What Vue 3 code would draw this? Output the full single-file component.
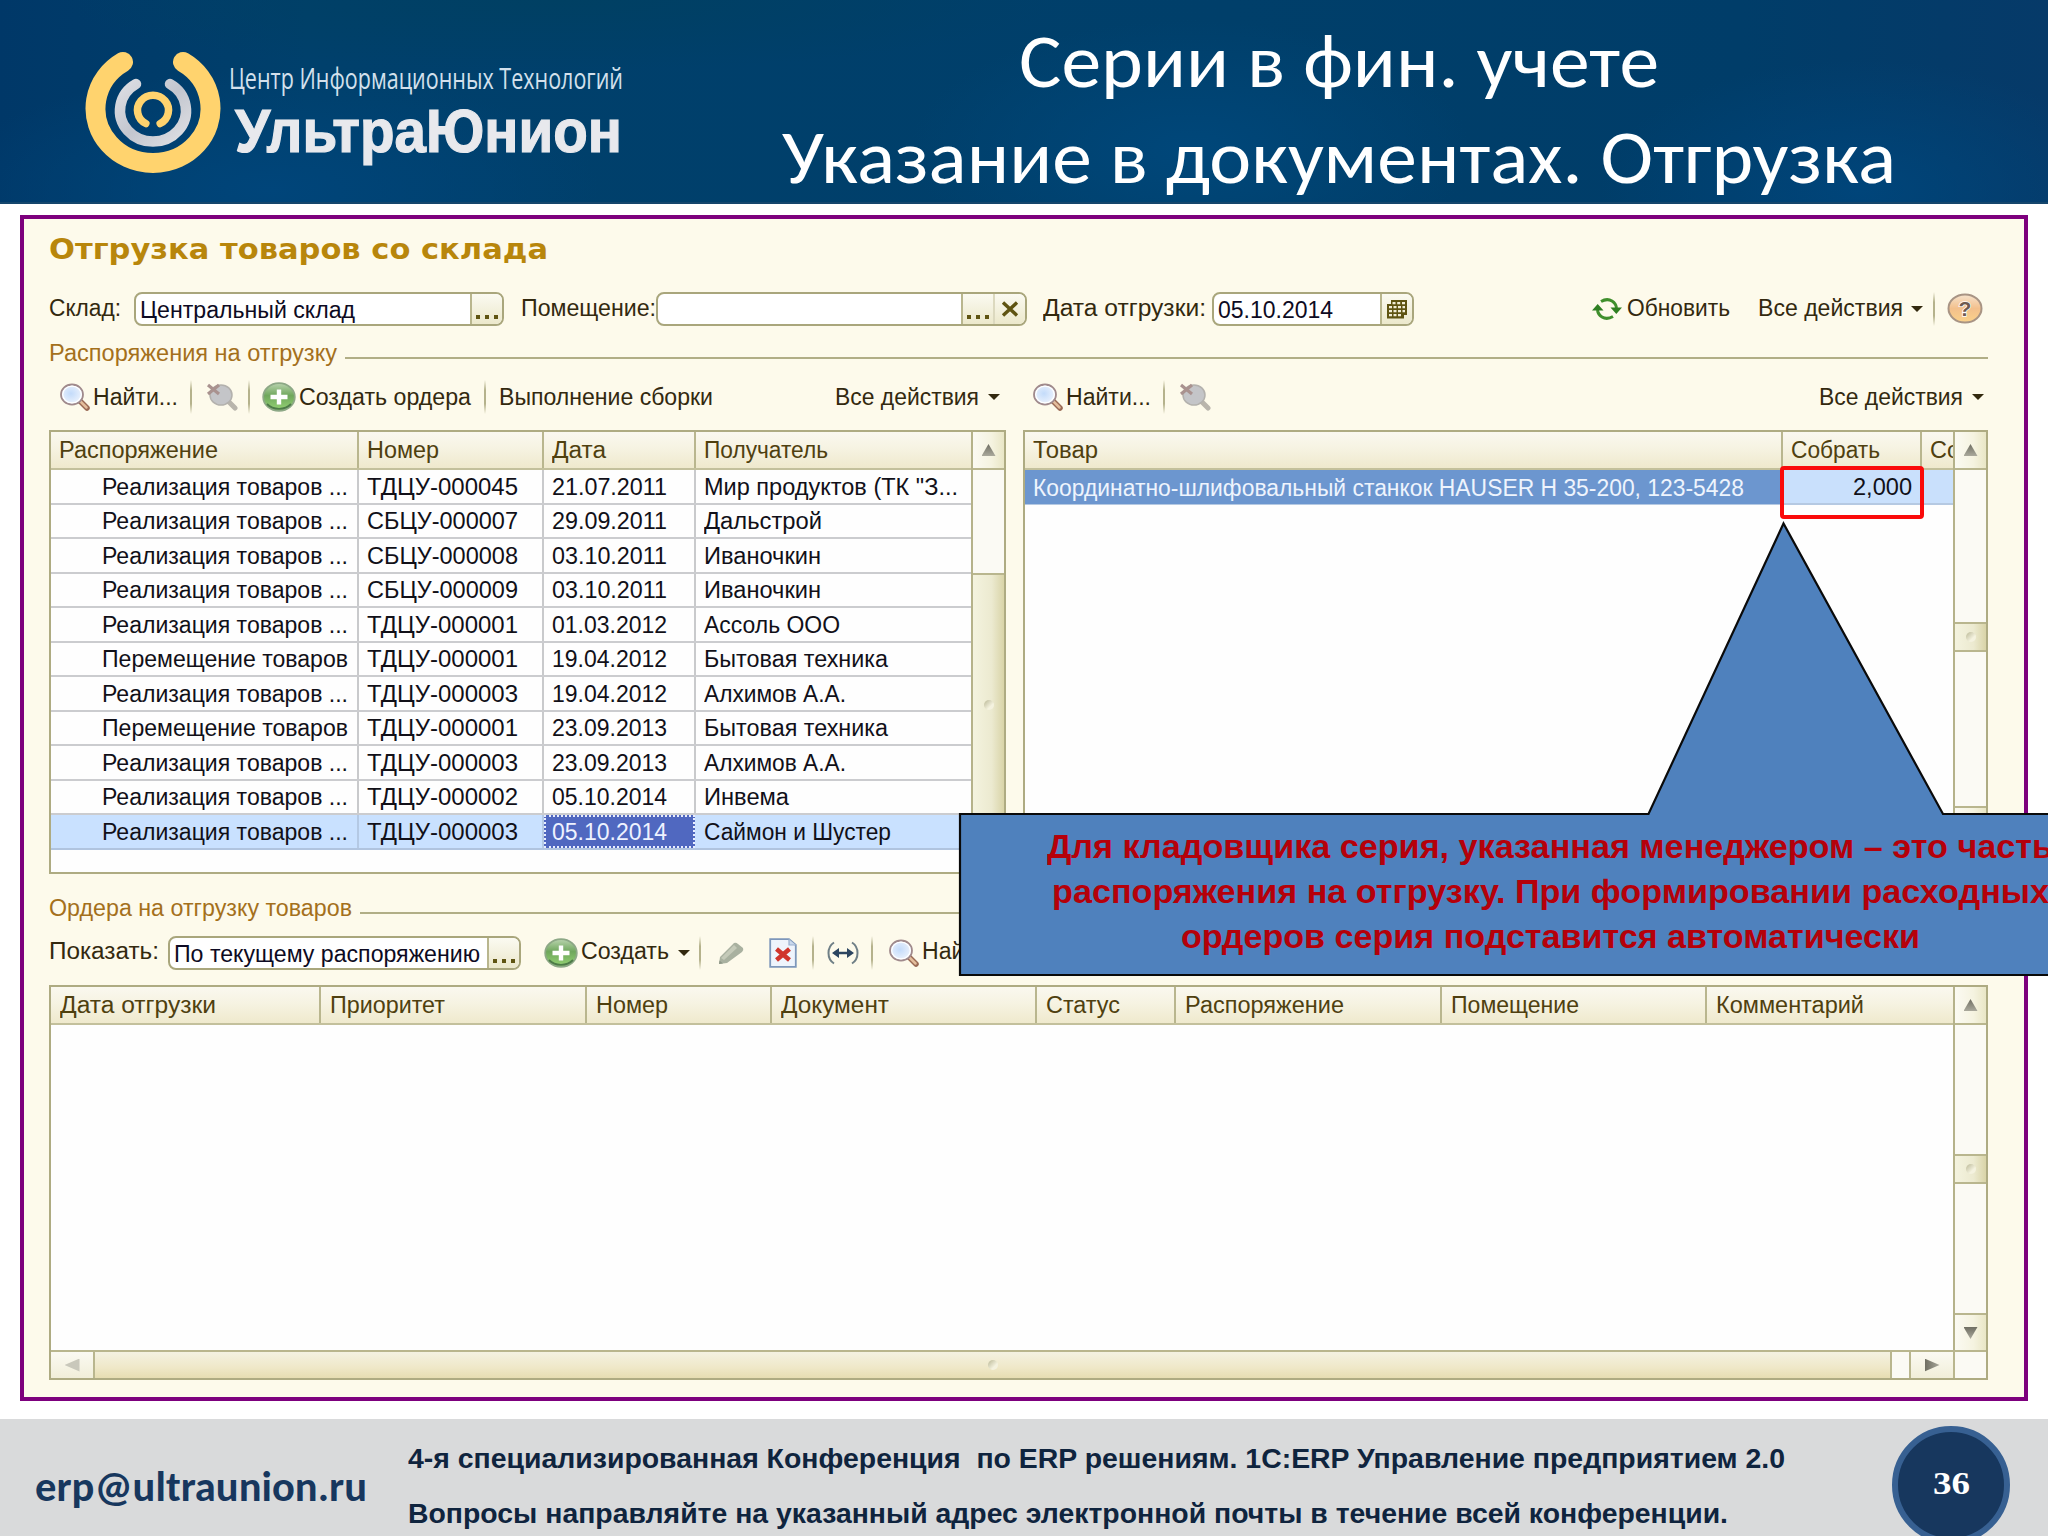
<script setup>
const fitText = (el, { value }) => {
  el.style.transform = 'none'
  el.style.marginRight = '0'
  const natural = el.getBoundingClientRect().width
  if (!natural) return
  el.style.transform = `scaleX(${value / natural})`
  el.style.marginRight = `${value - natural}px`
}
// Stretches a label horizontally to the given width
const vFit = { mounted: fitText, updated: fitText }

const R = 'Реализация товаров ...'
const P = 'Перемещение товаров'
const orders = [
  [R, 'ТДЦУ-000045', '21.07.2011', 'Мир продуктов (ТК "З...', 254],
  [R, 'СБЦУ-000007', '29.09.2011', 'Дальстрой', 118],
  [R, 'СБЦУ-000008', '03.10.2011', 'Иваночкин', 117],
  [R, 'СБЦУ-000009', '03.10.2011', 'Иваночкин', 117],
  [R, 'ТДЦУ-000001', '01.03.2012', 'Ассоль ООО', 136],
  [P, 'ТДЦУ-000001', '19.04.2012', 'Бытовая техника', 184],
  [R, 'ТДЦУ-000003', '19.04.2012', 'Алхимов А.А.', 142],
  [P, 'ТДЦУ-000001', '23.09.2013', 'Бытовая техника', 184],
  [R, 'ТДЦУ-000003', '23.09.2013', 'Алхимов А.А.', 142],
  [R, 'ТДЦУ-000002', '05.10.2014', 'Инвема', 85],
  [R, 'ТДЦУ-000003', '05.10.2014', 'Саймон и Шустер', 187],
]
const orderHeads = [['Распоряжение', 159], ['Номер', 72], ['Дата', 54], ['Получатель', 124]]
const shipHeads = [
  ['Дата отгрузки', 156], ['Приоритет', 115], ['Номер', 72], ['Документ', 108],
  ['Статус', 74], ['Распоряжение', 159], ['Помещение', 128], ['Комментарий', 148],
]
</script>

<template>
  <div class="slide">
    <svg width="0" height="0" class="defs">
      <defs>
        <radialGradient id="lens" cx=".45" cy=".45" r=".6">
          <stop offset="0" stop-color="#c3dbfa" /><stop offset="1" stop-color="#f2f6fd" />
        </radialGradient>
        <linearGradient id="green" x1="0" y1="0" x2="0" y2="1">
          <stop offset="0" stop-color="#b9d3ae" /><stop offset=".45" stop-color="#6fa75c" /><stop offset="1" stop-color="#96d474" />
        </linearGradient>
        <linearGradient id="amber" x1="0" y1="0" x2="0" y2="1">
          <stop offset="0" stop-color="#f6e3cd" /><stop offset=".5" stop-color="#f3c08c" /><stop offset="1" stop-color="#fbd28a" />
        </linearGradient>
        <linearGradient id="silver" x1="0" y1="0" x2="1" y2="1">
          <stop offset="0" stop-color="#dcdde3" /><stop offset=".5" stop-color="#c3c6cf" /><stop offset="1" stop-color="#dfe0e4" />
        </linearGradient>
        <symbol id="find" viewBox="0 0 30 28">
          <path d="M20 18 L27 25" stroke="#9a6a55" stroke-width="5.5" stroke-linecap="round" />
          <path d="M20.500 18.500 L26.500 24.500" stroke="#e3bd9c" stroke-width="2.500" stroke-linecap="round" />
          <ellipse cx="12" cy="11.500" rx="11" ry="10" fill="url(#lens)" stroke="#a08a8c" stroke-width="1.800" />
          <ellipse cx="12" cy="11.500" rx="9.300" ry="8.300" fill="none" stroke="#fff" stroke-width="1.200" />
        </symbol>
        <symbol id="unfind" viewBox="0 0 32 28">
          <path d="M22 18 L29 25" stroke="#b9b5ac" stroke-width="5" stroke-linecap="round" />
          <ellipse cx="15" cy="12" rx="11" ry="10" fill="#c4c5c8" stroke="#b3b1ad" stroke-width="1.500" />
          <path d="M2 2 L13 11 M13 2 L2 11" stroke="#a9928f" stroke-width="3.200" />
        </symbol>
        <symbol id="plus" viewBox="0 0 34 30">
          <ellipse cx="17" cy="15" rx="15.800" ry="13.800" fill="url(#green)" stroke="#8da886" stroke-width="1.800" />
          <path d="M5 22 A15.800 13.800 0 0 0 29 22" fill="none" stroke="#4d7a48" stroke-width="1.800" />
          <path d="M17 7.500V22.500M8.500 15H25.500" stroke="#fff" stroke-width="4.400" />
        </symbol>
      </defs>
    </svg>

    <header class="top">
      <svg class="mark" width="140" height="126" viewBox="84 50 140 126" fill="none" stroke-linecap="round">
        <path d="M123 62 A57.500 54.500 0 1 0 183 62" stroke="#ffd36e" stroke-width="20" />
        <path d="M136 84 A33 31 0 1 0 170 84" stroke="url(#silver)" stroke-width="10.500" />
        <path d="M145.800 123.500 A15.500 15 0 1 1 160.200 123.500" stroke="#ffd36e" stroke-width="7.500" />
      </svg>
      <div class="brand">
        <div class="brand-sub"><span v-fit="394" class="t">Центр Информационных Технологий</span></div>
        <div class="brand-name"><span v-fit="387" class="t">УльтраЮнион</span></div>
      </div>
      <h1 class="heading">
        <span class="line"><span v-fit="640" class="t">Серии в фин. учете</span></span>
        <span class="line"><span v-fit="1114" class="t">Указание в документах. Отгрузка</span></span>
      </h1>
    </header>

    <main class="panel">
      <h2 class="title"><span v-fit="499" class="t">Отгрузка товаров со склада</span></h2>

      <div class="row filters">
        <span class="lab"><span v-fit="72" class="t">Склад:</span></span>
        <div class="field store">
          <div class="value"><span v-fit="215" class="t">Центральный склад</span></div>
          <div class="btn dots"><i /><i /><i /></div>
        </div>
        <span class="lab room-lab"><span v-fit="135" class="t">Помещение:</span></span>
        <div class="field room">
          <div class="value" />
          <div class="btn dots"><i /><i /><i /></div>
          <div class="btn faint">
            <svg width="18" height="16" viewBox="0 0 18 16"><path d="M2 1.500L16 14.500M16 1.500L2 14.500" stroke="#5f5412" stroke-width="3.400" /></svg>
          </div>
        </div>
        <span class="lab date-lab"><span v-fit="163" class="t">Дата отгрузки:</span></span>
        <div class="field date">
          <div class="value"><span v-fit="115" class="t">05.10.2014</span></div>
          <div class="btn">
            <svg width="22" height="21" viewBox="0 0 22 21">
              <path d="M5 1H21V16H18V19.500H1V5H5Z" fill="#5f5412" />
              <path d="M6.500 3h3v2.200h-3zM11.200 3h3v2.200h-3zM16 3h3v2.200h-3zM3 7h3v2.200h-3zM7.500 7h3v2.200h-3zM12 7h3v2.200h-3zM16.500 7h2.500v2.200h-2.500zM3 11h3v2.200h-3zM7.500 11h3v2.200h-3zM12 11h3v2.200h-3zM16.500 11h2.500v2.200h-2.500zM3 15h3v2.200h-3zM7.500 15h3v2.200h-3zM12 15h3v2.200h-3z" fill="#f2eed6" />
            </svg>
          </div>
        </div>
        <div class="right-tools">
          <svg width="30" height="22" viewBox="0 0 30 22" fill="none" stroke="#3f8f2c" stroke-width="3">
            <path d="M9 3.500 Q15 0 20 3 Q24 5.500 24.500 10" /><path d="M21 18.500 Q15 22 10 19 Q6 16.500 5.500 12" />
            <path d="M18.500 9.500H30L24.300 16ZM0 12.500H11.500L5.700 6Z" fill="#2f7f22" stroke="none" />
          </svg>
          <span v-fit="103" class="t refresh">Обновить</span>
          <span v-fit="145" class="t">Все действия</span><i class="caret" /><i class="sep help-sep" />
          <svg width="36" height="31" viewBox="0 0 36 31">
            <ellipse cx="18" cy="15.500" rx="16.500" ry="14" fill="url(#amber)" stroke="#a89484" stroke-width="2" />
            <text x="18" y="23" text-anchor="middle" class="q">?</text>
          </svg>
        </div>
      </div>

      <div class="section first">
        <span v-fit="288" class="t">Распоряжения на отгрузку</span><i class="rule" />
      </div>

      <div class="bars">
        <div class="bar left-bar">
          <svg class="ic-find" width="30" height="28"><use href="#find" /></svg>
          <span v-fit="85" class="t">Найти...</span><i class="sep s1" />
          <svg class="ic-unfind" width="32" height="28"><use href="#unfind" /></svg><i class="sep s2" />
          <svg class="ic-plus" width="34" height="30"><use href="#plus" /></svg>
          <span v-fit="172" class="t">Создать ордера</span><i class="sep s3" />
          <span v-fit="214" class="t">Выполнение сборки</span>
          <span v-fit="144" class="t all">Все действия</span><i class="caret" />
        </div>
        <div class="bar right-bar">
          <svg class="ic-find" width="30" height="28"><use href="#find" /></svg>
          <span v-fit="85" class="t">Найти...</span><i class="sep s1" />
          <svg class="ic-unfind" width="32" height="28"><use href="#unfind" /></svg>
          <span v-fit="144" class="t all">Все действия</span><i class="caret" />
        </div>
      </div>

      <div class="tables">
        <div class="grid orders">
          <div class="sheet">
            <div class="head cols">
              <div v-for="h in orderHeads" :key="h[0]" class="cell"><span v-fit="h[1]" class="t">{{ h[0] }}</span></div>
            </div>
            <div v-for="(o, i) in orders" :key="i" class="cols line-row" :class="{ current: i === 10 }">
              <div class="cell"><span v-fit="246" class="t">{{ o[0] }}</span></div>
              <div class="cell"><span v-fit="151" class="t">{{ o[1] }}</span></div>
              <div class="cell" :class="{ active: i === 10 }"><span v-fit="115" class="t">{{ o[2] }}</span></div>
              <div class="cell"><span v-fit="o[4]" class="t">{{ o[3] }}</span></div>
            </div>
          </div>
          <div class="scroll">
            <div class="sbtn"><i class="up" /></div>
            <div class="gap-a" />
            <div class="thumb long"><i class="grip" /></div>
          </div>
        </div>
        <div class="grid goods">
          <div class="sheet">
            <div class="head gcols">
              <div class="cell"><span v-fit="65" class="t">Товар</span></div>
              <div class="cell"><span v-fit="89" class="t">Собрать</span></div>
              <div class="cell"><span v-fit="30" class="t">Со</span></div>
            </div>
            <div class="gcols picked">
              <div class="cell main"><span v-fit="711" class="t">Координатно-шлифовальный станкок HAUSER H 35-200, 123-5428</span></div>
              <div class="cell num"><span v-fit="59" class="t">2,000</span></div>
              <div class="cell" />
            </div>
          </div>
          <div class="scroll">
            <div class="sbtn"><i class="up" /></div>
            <div class="gap-b" />
            <div class="thumb short"><i class="grip" /></div>
            <div class="gap-c" />
            <div class="sbtn last"><i class="down" /></div>
          </div>
          <div class="mark-box" />
        </div>
      </div>

      <div class="section second">
        <span v-fit="303" class="t">Ордера на отгрузку товаров</span><i class="rule" />
      </div>

      <div class="row lower">
        <span class="lab"><span v-fit="110" class="t">Показать:</span></span>
        <div class="field show">
          <div class="value"><span v-fit="306" class="t">По текущему распоряжению</span></div>
          <div class="btn dots"><i /><i /><i /></div>
        </div>
        <div class="lower-tools">
          <svg width="34" height="30"><use href="#plus" /></svg>
          <span v-fit="88" class="t create">Создать</span><i class="caret" /><i class="sep a" />
          <svg class="pencil" width="27" height="24" viewBox="0 0 27 24">
            <path d="M1 23L2 16L16 2Q18 1 20 3L25 7Q26 9 24 11L9 22Z" fill="#a9b1a0" /><path d="M3 17L16 4L19 7L6 19Z" fill="#c5cab9" /><path d="M1 23l.5-3.500 3.500 3z" fill="#8e9787" />
          </svg>
          <svg class="doc" width="28" height="30" viewBox="0 0 28 30">
            <path d="M1.200 1.200H20L26.800 7V28.800H1.200Z" fill="#eef4fc" stroke="#7d97bb" stroke-width="1.800" /><path d="M20 1.200V7H26.800" fill="#c9d8ec" stroke="#9ab0cf" stroke-width="1.200" />
            <path d="M7.500 11L20.500 22M20.500 11L7.500 22" stroke="#d0352c" stroke-width="4.500" />
          </svg><i class="sep b" />
          <svg class="width" width="32" height="24" viewBox="0 0 32 24" fill="none" stroke="#6f7f86" stroke-width="2">
            <path d="M7 1.500Q1.500 5 1.500 12T7 22.500M25 1.500Q30.500 5 30.500 12T25 22.500" />
            <path d="M9 12H23" stroke="#2c4560" stroke-width="2.500" /><path d="M5 12l7-5v10zM27 12l-7-5v10z" fill="#2c4560" stroke="none" />
          </svg><i class="sep c" />
          <svg class="lower-find" width="30" height="28"><use href="#find" /></svg>
          <span v-fit="85" class="t">Найти...</span>
        </div>
      </div>

      <div class="grid ships">
        <div class="upper">
          <div class="sheet">
            <div class="head scols">
              <div v-for="(h, i) in shipHeads" :key="i" class="cell"><span v-fit="h[1]" class="t">{{ h[0] }}</span></div>
            </div>
          </div>
          <div class="scroll">
            <div class="sbtn"><i class="up" /></div>
            <div class="gap-d" />
            <div class="thumb short"><i class="grip" /></div>
            <div class="gap-e" />
            <div class="sbtn last"><i class="down" /></div>
          </div>
        </div>
        <div class="hscroll">
          <div class="hbtn"><i class="prev" /></div>
          <div class="hthumb"><i class="grip" /></div>
          <div class="hgap" />
          <div class="hbtn end"><i class="next" /></div>
          <div class="corner" />
        </div>
      </div>
    </main>

    <footer class="foot">
      <div class="mail"><span v-fit="332" class="t">erp@ultraunion.ru</span></div>
      <div class="notes">
        <div><span v-fit="1377" class="t">4-я специализированная Конференция&nbsp; по ERP решениям. 1С:ERP Управление предприятием 2.0</span></div>
        <div><span v-fit="1320" class="t">Вопросы направляйте на указанный адрес электронной почты в течение всей конференции.</span></div>
      </div>
      <div class="page"><span v-fit="37" class="t">36</span></div>
    </footer>

    <div class="callout">
      <svg width="1090" height="456" viewBox="958 521 1090 456">
        <path d="M960 814H1648.500L1783.500 523.500L1943 814H2060V975H960Z" fill="#4f81bd" stroke="#0a0a0a" stroke-width="2.200" />
      </svg>
      <div class="message">
        <div><span v-fit="1006" class="t">Для кладовщика серия, указанная менеджером – это часть</span></div>
        <div><span v-fit="997" class="t">распоряжения на отгрузку. При формировании расходных</span></div>
        <div><span v-fit="739" class="t">ордеров серия подставится автоматически</span></div>
      </div>
    </div>
  </div>
</template>

<style>
body { margin: 0; overflow: hidden; }
</style>

<style scoped>
* { box-sizing: border-box; }
.slide { position: relative; width: 2048px; height: 1536px; overflow: hidden; background: #fff; display: flex; flex-direction: column; font: 23px "Liberation Sans", Arial, sans-serif; color: #33290f; }
.defs { position: absolute; }
.t { display: inline-block; white-space: pre; transform-origin: 0 50%; flex: none; }
svg, i { flex: none; }
i { display: block; }

.top { height: 204px; flex: none; display: flex; align-items: flex-start; border-bottom: 2px solid #15466c;
  background:
    radial-gradient(ellipse 330px 120px at 270px 190px, #00457a, transparent),
    radial-gradient(ellipse 280px 130px at 1190px 150px, #00477a, transparent),
    radial-gradient(ellipse 260px 130px at 1860px 190px, #00457a, transparent),
    radial-gradient(ellipse 500px 70px at 560px 0, #004063, transparent),
    linear-gradient(90deg, #003868, #00406c 15%, #003f6a 60%, #003d69 85%, #063a69); }
.mark { margin: 50px 0 0 84px; }
.brand { margin-left: 5px; padding-top: 55px; width: 500px; }
.brand-sub { height: 46px; font: 30px/46px "Open Sans", sans-serif; color: #d3e0ec; }
.brand-name { padding-left: 6px; font: bold 61px/60px "Liberation Sans", sans-serif; color: #e8e9ed; -webkit-text-stroke: 1.200px #e8e9ed; }
.heading { margin: 13px 0 0; width: 1220px; font: 400 77px/96px Carlito, Lato, "Open Sans", sans-serif; color: #fff; display: flex; flex-direction: column; align-items: center; }
.line { display: flex; height: 96px; }

.panel { width: 2008px; height: 1186px; flex: none; margin: 11px 0 0 20px; border: 4px solid #7d007d; background: #fdfaeb; padding: 0 32px 0 25px; }
.title { margin: 0 0 12px; height: 61px; font: bold 28px/61px "DejaVu Sans", sans-serif; color: #b8860b; }
.row { height: 34px; display: flex; }
.lab { line-height: 33px; flex: none; }
.field { flex: none; display: flex; height: 34px; border: 2px solid #a9a67c; border-radius: 8px; background: #fff; overflow: hidden; color: #0d0a22; }
.value { flex: 1; padding-left: 4px; line-height: 32px; white-space: nowrap; }
.btn { width: 32px; border-left: 2px solid #b9b68e; background: linear-gradient(#fbfaf1, #ece8cb); display: flex; align-items: center; justify-content: center; }
.btn.faint { border-left-color: #dcd9bf; }
.dots { gap: 5px; align-items: flex-end; padding-bottom: 5px; }
.dots i { width: 4px; height: 4px; background: #5f5412; }
.store { width: 370px; margin-left: 13px; }
.room-lab { margin-left: 17px; }
.room { width: 371px; margin-left: 0; }
.date-lab { margin-left: 16px; }
.date { width: 202px; margin-left: 6px; }
.right-tools { margin-left: auto; display: flex; align-items: center; height: 33px; padding-right: 9px; }
.refresh { margin-left: 5px; }
.right-tools .refresh + .t { margin-left: 28px; }
.caret { width: 0; height: 0; margin-left: 9px; border: 6px solid transparent; border-top: 6px solid #33290f; border-bottom: 0; }
.right-tools .caret { margin-left: 8px; }
.sep { width: 2px; height: 34px; background: linear-gradient(transparent, #b5b28c 30%, #b5b28c 70%, transparent); }
.help-sep { margin: 0 12px 0 10px; }
.q { font: bold 21px "Liberation Sans", sans-serif; fill: #6e5a50; stroke: #fff; stroke-width: 1.500px; paint-order: stroke; }

.section { display: flex; align-items: center; color: #a4701c; padding-right: 4px; }
.first { height: 54px; padding-top: 1px; }
.second { height: 62px; padding-top: 7px; }
.rule { flex: 1; height: 2px; background: #b1ae86; margin: 9px 0 0 8px; }

.bars { display: flex; gap: 18px; height: 34px; margin: 0 3px 16px 1px; }
.bar { display: flex; align-items: center; }
.left-bar { width: 956px; padding: 0 6px 0 10px; }
.right-bar { flex: 1; padding: 0 5px 0 9px; }
.ic-find { margin-right: 3px; }
.s1 { margin: 0 14px 0 12px; }
.s2 { margin: 0 12px 0 10px; }
.ic-plus { margin-right: 3px; }
.s3 { margin: 0 13px 0 13px; }
.all { margin-left: auto; }

.tables { display: flex; gap: 17px; }
.grid { border: 2px solid #aeab82; background: #fefefe; display: flex; }
.orders { width: 957px; height: 444px; }
.goods { position: relative; width: 965px; height: 444px; }
.sheet { flex: 1; min-width: 0; overflow: hidden; }
.head { height: 38px; background: linear-gradient(#faf8ef, #f6f3e2 45%, #efe9cd); border-bottom: 2px solid #c3c09c; color: #4f400f; }
.cols { display: grid; grid-template-columns: 308px 185px 152px 1fr; }
.gcols { display: grid; grid-template-columns: 758px 139px 1fr; }
.cell { display: flex; align-items: center; padding-left: 8px; border-right: 2px solid #c9cacc; overflow: hidden; }
.cell:last-child { border-right: 0; }
.head .cell { border-color: #b9b68e; }
.line-row { height: 34.500px; border-bottom: 2px solid #cbcccf; color: #111018; }
.line-row .cell { padding-top: 2px; }
.line-row .cell:first-child { padding-left: 51px; }
.current { background: #c9e1ff; border-color: #b0c4df; }
.current .cell { border-color: #b4c9e4; }
.line-row .active { background: #5068c0; color: #eef2ff; border: 2px dotted #e8eeff; padding-left: 6px; margin-right: 1px; }
.picked { height: 35px; background: #c9e0fc; border-bottom: 2px solid #b5c9e2; color: #111018; }
.picked .cell { padding-top: 2px; }
.main { background: #6c96cf; color: #eef4fd; border-color: #6c96cf; margin-bottom: -1px; }
.num { justify-content: flex-end; padding-right: 8px; border-color: #bcd0ea; }
.scroll { width: 33px; flex: none; border-left: 2px solid #b5b28a; background: #fbfaf4; display: flex; flex-direction: column; overflow: hidden; }
.sbtn { height: 38px; flex: none; background: linear-gradient(90deg, #fbfaf2, #f5f3e0 60%, #e9e6c6); border-bottom: 2px solid #b9b68e; display: flex; align-items: center; justify-content: center; }
.sbtn.last { border-bottom: 0; border-top: 2px solid #b9b68e; }
.up, .down { width: 14px; height: 12px; background: linear-gradient(#6f6e62, #aaa99c); clip-path: polygon(50% 0, 100% 100%, 0 100%); }
.down { clip-path: polygon(0 0, 100% 0, 50% 100%); }
.thumb { flex: none; border: 2px solid #b9b68e; border-width: 2px 0; background: linear-gradient(90deg, #f4f3df, #ecead0 60%, #d9d4a8); display: flex; align-items: center; justify-content: center; }
.grip { width: 10px; height: 10px; border-radius: 50%; background: linear-gradient(135deg, #b9b795, #f4f2df 65%); }
.gap-a { height: 103px; flex: none; }
.long { height: 264px; }
.gap-b { height: 152px; flex: none; }
.short { height: 30px; }
.gap-c { height: 154px; flex: none; }
.gap-d { height: 129px; flex: none; }
.gap-e { height: 129px; flex: none; }
.mark-box { position: absolute; left: 755px; top: 34px; width: 144px; height: 53px; border: 4px solid #fa0a0a; border-radius: 4px; }

.lower { margin-bottom: 15px; }
.lower .lab { line-height: 31px; }
.show { width: 353px; margin-left: 9px; }
.lower-tools { display: flex; align-items: center; height: 33px; margin-left: 23px; }
.lower-tools .t { position: relative; top: -1px; }
.create { margin-left: 3px; }
.a { margin: 0 17px 0 9px; }
.doc { margin-left: 24px; }
.b { margin: 0 13px 0 15px; }
.c { margin: 0 16px 0 12px; }
.lower-find { margin-right: 3px; }

.ships { width: 1939px; height: 395px; flex-direction: column; }
.upper { display: flex; height: 363px; }
.scols { display: grid; grid-template-columns: 270px 266px 185px 265px 139px 266px 265px 1fr; }
.scols .cell { padding-left: 9px; }
.hscroll { flex: 1; border-top: 2px solid #b9b68e; display: flex; background: #fbfaf4; }
.hbtn { width: 44px; border-right: 2px solid #b9b68e; background: linear-gradient(#fbfaf2, #f1eed9); display: flex; align-items: center; justify-content: center; }
.hthumb { flex: 1; background: linear-gradient(#f4f2e2, #efe8c8 60%, #e6ddb2); border-right: 2px solid #b9b68e; display: flex; align-items: center; justify-content: center; }
.hgap { width: 17px; }
.end { width: 46px; border-left: 2px solid #b9b68e; }
.corner { width: 31px; }
.prev, .next { width: 15px; height: 13px; background: linear-gradient(90deg, #6f6e62, #aaa99c); clip-path: polygon(0 0, 100% 50%, 0 100%); }
.prev { background: #c9c8bb; clip-path: polygon(100% 0, 100% 100%, 0 50%); }

.foot { margin-top: 18px; height: 117px; flex: none; background: #d9dadb; display: flex; }
.mail { width: 372px; padding-left: 35px; font: bold 42px/46px Carlito, Lato, "Open Sans", sans-serif; color: #17375e; padding-top: 45px; }
.notes { margin-left: 36px; width: 1484px; padding-top: 12px; font-weight: bold; font-size: 27.500px; line-height: 55px; color: #0f243e; }
.page { width: 118px; height: 118px; margin-top: 7px; flex: none; border-radius: 50%; border: 6px solid #376092; background: #17375e; color: #fff; display: flex; align-items: center; justify-content: center; padding-bottom: 4px; font: bold 32px "Liberation Serif", serif; }

.callout { position: absolute; left: 958px; top: 521px; width: 1090px; height: 456px; }
.callout svg { position: absolute; left: 0; top: 0; }
.message { position: absolute; top: 303px; left: 0; width: 1184px; font-weight: bold; font-size: 34px; line-height: 45px; color: #b5000a; display: flex; flex-direction: column; align-items: center; }
.message div { display: flex; }
</style>
